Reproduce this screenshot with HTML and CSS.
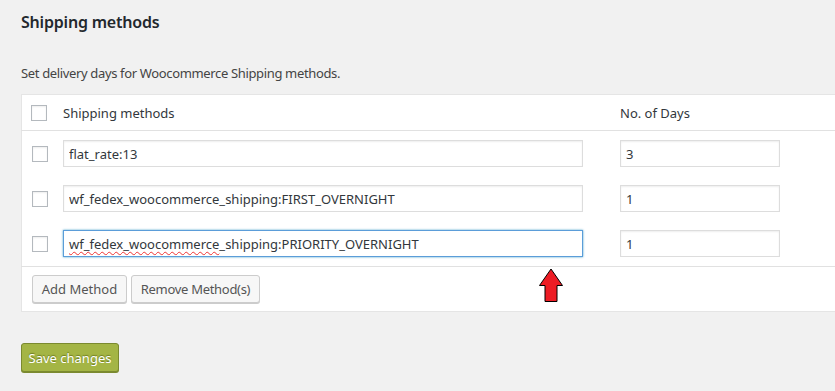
FILE: index.html
```html
<!DOCTYPE html>
<html lang="en">
<head>
  <meta charset="UTF-8" />
  <title>Shipping methods</title>
  <link rel="stylesheet" href="styles.css">
</head>
<body>
  <div class="wrap">
    <h2 class="title">Shipping methods</h2>
    <p class="desc">Set delivery days for Woocommerce Shipping methods.</p>

    <table class="methods">
      <thead>
        <tr>
          <th class="check-col"><span class="check"></span></th>
          <th class="name-col">Shipping methods</th>
          <th class="days-col">No. of Days</th>
        </tr>
      </thead>
      <tbody>
        <tr>
          <td class="check-col"><span class="check"></span></td>
          <td class="name-col"><input class="field name" type="text" value="flat_rate:13"></td>
          <td class="days-col"><input class="field days" type="text" value="3"></td>
        </tr>
        <tr>
          <td class="check-col"><span class="check"></span></td>
          <td class="name-col"><input class="field name" type="text" value="wf_fedex_woocommerce_shipping:FIRST_OVERNIGHT"></td>
          <td class="days-col"><input class="field days" type="text" value="1"></td>
        </tr>
        <tr>
          <td class="check-col"><span class="check"></span></td>
          <td class="name-col">
            <div class="field name focus"><span class="typo">wf_fedex_woocommerce</span>_shipping:PRIORITY_OVERNIGHT</div>
          </td>
          <td class="days-col"><input class="field days" type="text" value="1"></td>
        </tr>
      </tbody>
      <tfoot>
        <tr>
          <td colspan="3">
            <div class="actions">
              <button class="btn btn-add">Add Method</button>
              <button class="btn btn-remove">Remove Method(s)</button>
            </div>
          </td>
        </tr>
      </tfoot>
    </table>

    <button class="save">Save changes</button>

    <!-- annotation arrow -->
    <svg class="arrow" width="25" height="35" viewBox="0 0 25 35">
      <path d="M12 1 L23.5 17.5 L18 17.5 L18 33.5 L6 33.5 L6 17.5 L0.5 17.5 Z" fill="#ed1c24" stroke="#000" stroke-width="1"/>
    </svg>
  </div>
</body>
</html>
```

FILE: styles.css
```css
body {
  margin: 0;
  background: #f1f1f1;
  color: #444;
  font-family: "Noto Sans", "Open Sans", sans-serif;
  font-size: 13px;
  overflow: hidden;
}

.wrap {
  position: relative;
  padding: 0 0 20px 21px;
}

.title {
  margin: 0;
  padding-top: 11px;
  font-size: 16px;
  font-weight: 600;
  letter-spacing: -0.2px;
  line-height: 23px;
  color: #23282d;
}

.desc {
  margin: 0;
  padding-top: 29px;
  line-height: 20px;
  height: 31px;
  letter-spacing: -0.35px;
}

.methods {
  width: calc(100% + 4px);
  border-collapse: collapse;
  background: #fff;
  border: 1px solid #e5e5e5;
}

.methods th {
  text-align: left;
  font-weight: 400;
  color: #32373c;
  height: 35px;
  padding: 0;
  border-bottom: 1px solid #e1e1e1;
}

.methods td {
  padding: 0;
  height: 45px;
}

.check-col {
  width: 41px;
}

.methods th.check-col .check {
  margin-left: 9px;
}

.name-col {
  width: 557px;
}

.check {
  display: block;
  width: 14px;
  height: 14px;
  margin-left: 10px;
  border: 1px solid #b4b9be;
  background: #fff;
  box-shadow: inset 0 1px 2px rgba(0, 0, 0, 0.07);
}

.field {
  box-sizing: border-box;
  height: 27px;
  border: 1px solid #ddd;
  box-shadow: inset 0 1px 2px rgba(0, 0, 0, 0.07);
  background: #fff;
  color: #32373c;
  font-family: inherit;
  font-size: 13px;
  padding: 0 5px;
  margin: 0;
  display: block;
}

.field.name {
  width: 520px;
}

.field.days {
  width: 160px;
}

.field.focus {
  display: flex;
  align-items: center;
  border-color: #5b9dd9;
  box-shadow: 0 0 2px rgba(30, 140, 190, 0.8);
}

.typo {
  text-decoration: underline wavy #e33;
  text-decoration-thickness: 1px;
  text-underline-offset: 2px;
}

.methods tfoot td {
  height: 44px;
  border-top: 1px solid #e1e1e1;
}

.actions {
  display: flex;
  gap: 4px;
  padding-left: 10px;
}

.btn {
  height: 28px;
  padding: 0;
  border: 1px solid #ccc;
  border-radius: 3px;
  background: #f7f7f7;
  box-shadow: 0 1px 0 #ccc;
  color: #555;
  font-family: inherit;
  font-size: 13px;
}

.btn-add {
  width: 95px;
}

.btn-remove {
  width: 129px;
  letter-spacing: -0.3px;
}

.save {
  margin-top: 31px;
  height: 29px;
  width: 98px;
  border: 1px solid #7b8a2f;
  border-radius: 3px;
  background: #a4b545;
  box-shadow: 0 1px 0 #7b8a2f;
  color: #fff;
  font-family: inherit;
  font-size: 13px;
  text-shadow: 0 -1px 1px #6b7a20;
}

.arrow {
  position: absolute;
  left: 539px;
  top: 268px;
}
```
